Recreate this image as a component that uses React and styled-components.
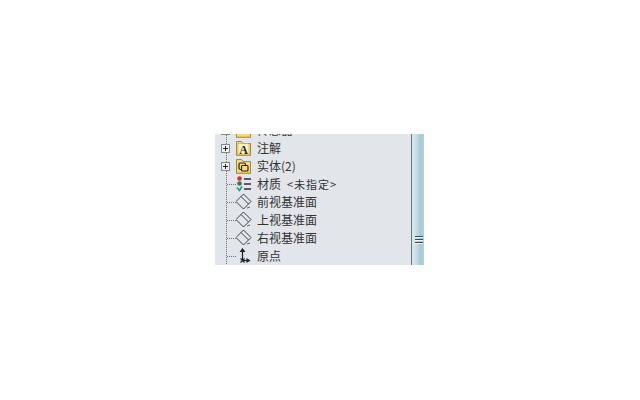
import React from "react";
import styled, { createGlobalStyle } from "styled-components";

const Global = createGlobalStyle`
  html, body { margin: 0; padding: 0; background: #fff; }
  body { font-family: "Noto Sans CJK SC", "Liberation Sans", sans-serif; }
`;
const Page = styled.div`
  width: 640px; height: 400px; padding: 134px 0 0 215px; box-sizing: border-box; overflow: hidden;
`;
const Panel = styled.div`
  width: 209px; height: 131px; display: flex; overflow: hidden; background: #e2e5e9;
`;
const Tree = styled.div`
  flex: 1; margin-top: -13px; min-width: 0;
`;
const Row = styled.div`
  height: 18px; display: flex; align-items: center;
  background-image: linear-gradient(to bottom, #6b6f73 50%, transparent 50%);
  background-size: 1px 2px; background-repeat: repeat-y; background-position: 11px 0;
`;
const Gutter = styled.div`
  width: 21px; height: 18px; flex: none; display: flex; align-items: center; box-sizing: border-box; padding-left: 6px;
`;
const Expander = styled.div`
  width: 9px; height: 9px; box-sizing: border-box; border: 1px solid #85898d; background: #eef0f2; position: relative; flex: none;
  &::before { content: ""; position: absolute; left: 1px; right: 1px; top: 3px; height: 1px; background: #222; }
  &::after { content: ""; position: absolute; top: 1px; bottom: 1px; left: 3px; width: 1px; background: #222; }
`;
const Dash = styled.div`
  width: 10px; height: 1px; margin-left: 6px; flex: none;
  background-image: linear-gradient(to right, #6b6f73 50%, transparent 50%); background-size: 2px 1px;
`;
const IconSlot = styled.div`
  width: 21px; height: 18px; flex: none; display: flex; align-items: center; justify-content: flex-start;
`;
const Label = styled.span`
  font-size: 12px; line-height: 18px; color: #333; white-space: nowrap;
`;
const Spec = styled.span`
  margin-left: 6px; font-size: 11px; letter-spacing: 1px;
`;
const Divider = styled.div`
  width: 1px; flex: none; background: #66747c;
`;
const Scrollbar = styled.div`
  width: 12px; flex: none; display: flex; align-items: flex-end; justify-content: flex-end; padding: 0 1px 20px 0; box-sizing: border-box;
  background: linear-gradient(to right, #dcebf0 0%, #c8dee6 35%, #a9c9d5 70%, #b4d0da 100%);
`;
const Grip = styled.div`
  width: 8px; height: 9px;
  background-image: linear-gradient(to bottom, #3d4a50 1px, #eef4f6 1px, #eef4f6 2px, transparent 2px);
  background-size: 8px 3px;
`;

const Folder = ({ children }) => (
  <svg width="16" height="18" viewBox="0 0 16 18">
    <path d="M0.500 16.500V2.500h5l1.500 2h7.500v12z" fill="#f8d978" stroke="#a8892f" />
    <path d="M1 16h13" stroke="#d9a93a" />
    {children}
  </svg>
);
const FolderA = () => (
  <Folder>
    <rect x="2" y="4.500" width="11" height="11" fill="#fdf0b8" stroke="#b09a50" strokeWidth="0.500" />
    <text x="7.500" y="14.500" fontSize="12" fontWeight="700" fontFamily="Liberation Serif, serif" textAnchor="middle" fill="#23252c">A</text>
  </Folder>
);
const FolderSolid = () => (
  <Folder>
    <rect x="3" y="6" width="6.500" height="6.500" rx="1.500" fill="none" stroke="#222" strokeWidth="1.200" />
    <rect x="5.500" y="8.500" width="6.500" height="5.500" rx="1" fill="#f8d978" stroke="#222" strokeWidth="1.200" />
  </Folder>
);
const Material = () => (
  <svg width="16" height="18" viewBox="0 0 16 18">
    <circle cx="3.500" cy="3.500" r="2.300" fill="#c8343a" />
    <circle cx="3.500" cy="8.500" r="2.300" fill="#3a7a3c" />
    <path d="M1 12.500l2.500 3 2.500-4" fill="none" stroke="#2f8f8a" strokeWidth="1.600" />
    <path d="M8 4h7M8 9h7M8 14h7" stroke="#2c3034" strokeWidth="1.500" />
  </svg>
);
const Plane = () => (
  <svg width="16" height="18" viewBox="0 0 16 18" fill="none" stroke="#3f4347">
    <path d="M7.500 1l7.500 7.500-7.500 7.500-7.500-7.500z" />
    <path d="M5 3.500l7.500 7.500" />
    <path d="M11 15l3-1" strokeWidth="0.800" />
  </svg>
);
const Origin = () => (
  <svg width="16" height="18" viewBox="0 0 16 18" fill="none" stroke="#1a2432">
    <path d="M6.500 13.500V2" strokeWidth="1.300" />
    <path d="M6.500 1l3 4h-6z" fill="#1a2432" stroke="none" />
    <path d="M6.500 13.500H11" strokeWidth="1.300" />
    <path d="M10.500 11l4 2.500-4 2.500z" fill="#1a2432" stroke="none" />
    <path d="M4.500 11.500l4 4M8.500 11.500l-4 4" strokeWidth="1.100" />
  </svg>
);

const rows = [
  { label: "传感器", icon: <Folder />, branch: true },
  { label: "注解", icon: <FolderA />, branch: true },
  { label: "实体(2)", icon: <FolderSolid />, branch: true },
  { label: "材质", spec: "<未指定>", icon: <Material /> },
  { label: "前视基准面", icon: <Plane /> },
  { label: "上视基准面", icon: <Plane /> },
  { label: "右视基准面", icon: <Plane /> },
  { label: "原点", icon: <Origin /> },
];

export default function App() {
  return (
    <Page>
      <Global />
      <Panel>
        <Tree>
          {rows.map((r) => (
            <Row key={r.label}>
              <Gutter>{r.branch ? <Expander /> : <Dash />}</Gutter>
              <IconSlot>{r.icon}</IconSlot>
              <Label>
                {r.label}
                {r.spec && <Spec>{r.spec}</Spec>}
              </Label>
            </Row>
          ))}
        </Tree>
        <Divider />
        <Scrollbar>
          <Grip />
        </Scrollbar>
      </Panel>
    </Page>
  );
}
